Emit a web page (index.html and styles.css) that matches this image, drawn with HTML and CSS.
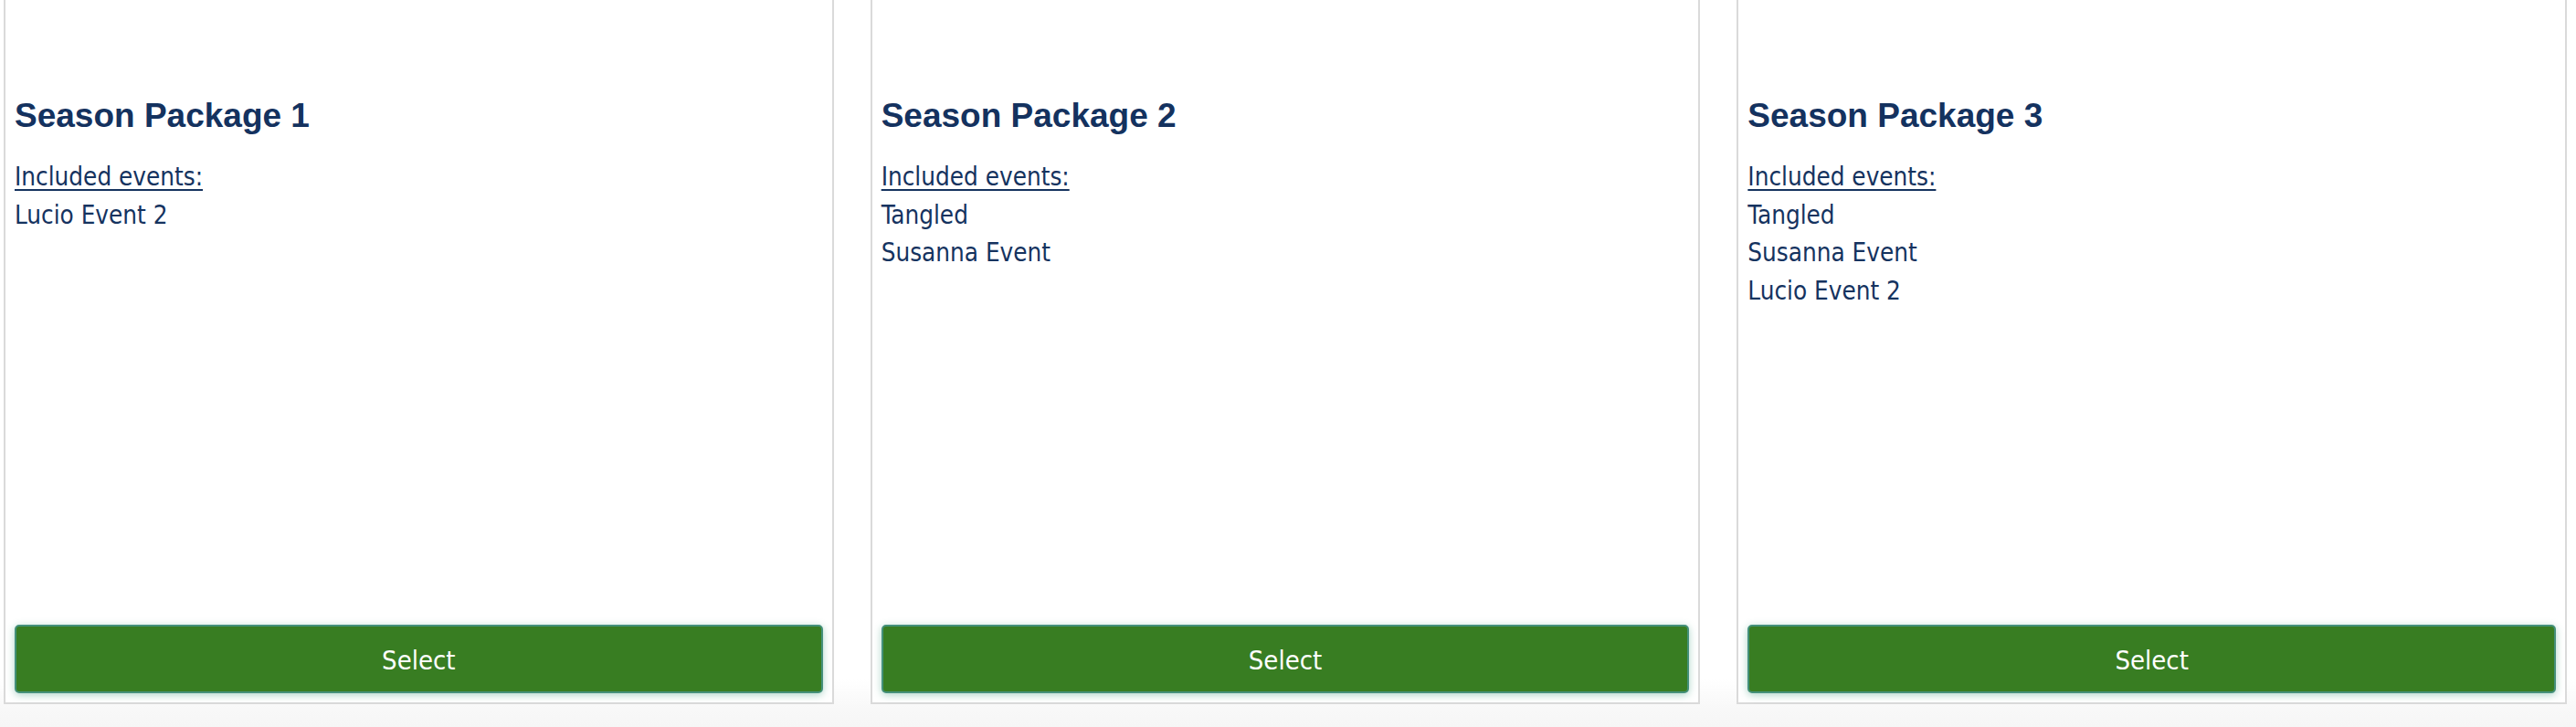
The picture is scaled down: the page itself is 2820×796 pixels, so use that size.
FILE: index.html
```html
<!DOCTYPE html>
<html lang="en">
<head>
<meta charset="utf-8">
<title>Season Packages</title>
<link rel="stylesheet" href="styles.css">
</head>
<body>
<div class="page">
  <div class="packages">
    <div class="card">
      <h2 class="card-title">Season Package 1</h2>
      <ul class="events">
        <li class="events-label">Included events:</li>
        <li>Lucio Event 2</li>
      </ul>
      <button class="select-btn" type="button">Select</button>
    </div>
    <div class="card">
      <h2 class="card-title">Season Package 2</h2>
      <ul class="events">
        <li class="events-label">Included events:</li>
        <li>Tangled</li>
        <li>Susanna Event</li>
      </ul>
      <button class="select-btn" type="button">Select</button>
    </div>
    <div class="card">
      <h2 class="card-title">Season Package 3</h2>
      <ul class="events">
        <li class="events-label">Included events:</li>
        <li>Tangled</li>
        <li>Susanna Event</li>
        <li>Lucio Event 2</li>
      </ul>
      <button class="select-btn" type="button">Select</button>
    </div>
  </div>
</div>
</body>
</html>
```
FILE: styles.css
```css
html, body {
  margin: 0;
  padding: 0;
}

body {
  width: 2820px;
  height: 796px;
  overflow: hidden;
  background: linear-gradient(to bottom, #ffffff 0, #ffffff 744px, #f8f8f8 776px, #f6f6f6 796px);
  font-family: "DejaVu Sans Condensed", "DejaVu Sans", sans-serif;
  color: #15335f;
}

.page {
  height: 796px;
}

.packages {
  display: flex;
  gap: 40px;
  padding: 0 10px 0 4px;
}

.card {
  flex: 1 1 0;
  min-width: 0;
  height: 771px;
  box-sizing: border-box;
  display: flex;
  flex-direction: column;
  border: 2px solid #dadada;
  border-top: none;
  background: #ffffff;
  padding: 105px 10px 10px 10px;
}

.card-title {
  margin: 0 0 24px 0;
  font-family: "Liberation Sans", Arial, sans-serif;
  font-weight: bold;
  font-size: 37px;
  line-height: 44px;
  color: #14325f;
}

.events {
  list-style: none;
  margin: 0;
  padding: 0;
  font-size: 27.6px;
  line-height: 41.7px;
}

.events-label {
  text-decoration: underline;
  text-decoration-thickness: 2px;
  text-underline-offset: 4px;
}

.select-btn {
  margin-top: auto;
  height: 75px;
  width: 100%;
  box-sizing: border-box;
  border: 2px solid #44907a;
  border-radius: 5px;
  background: #387d22;
  color: #ffffff;
  font-family: "DejaVu Sans Condensed", "DejaVu Sans", sans-serif;
  font-size: 29px;
  padding: 3px 0 0 0;
  box-shadow: 0 2px 9px rgba(70, 160, 130, 0.45);
  cursor: pointer;
}
```
